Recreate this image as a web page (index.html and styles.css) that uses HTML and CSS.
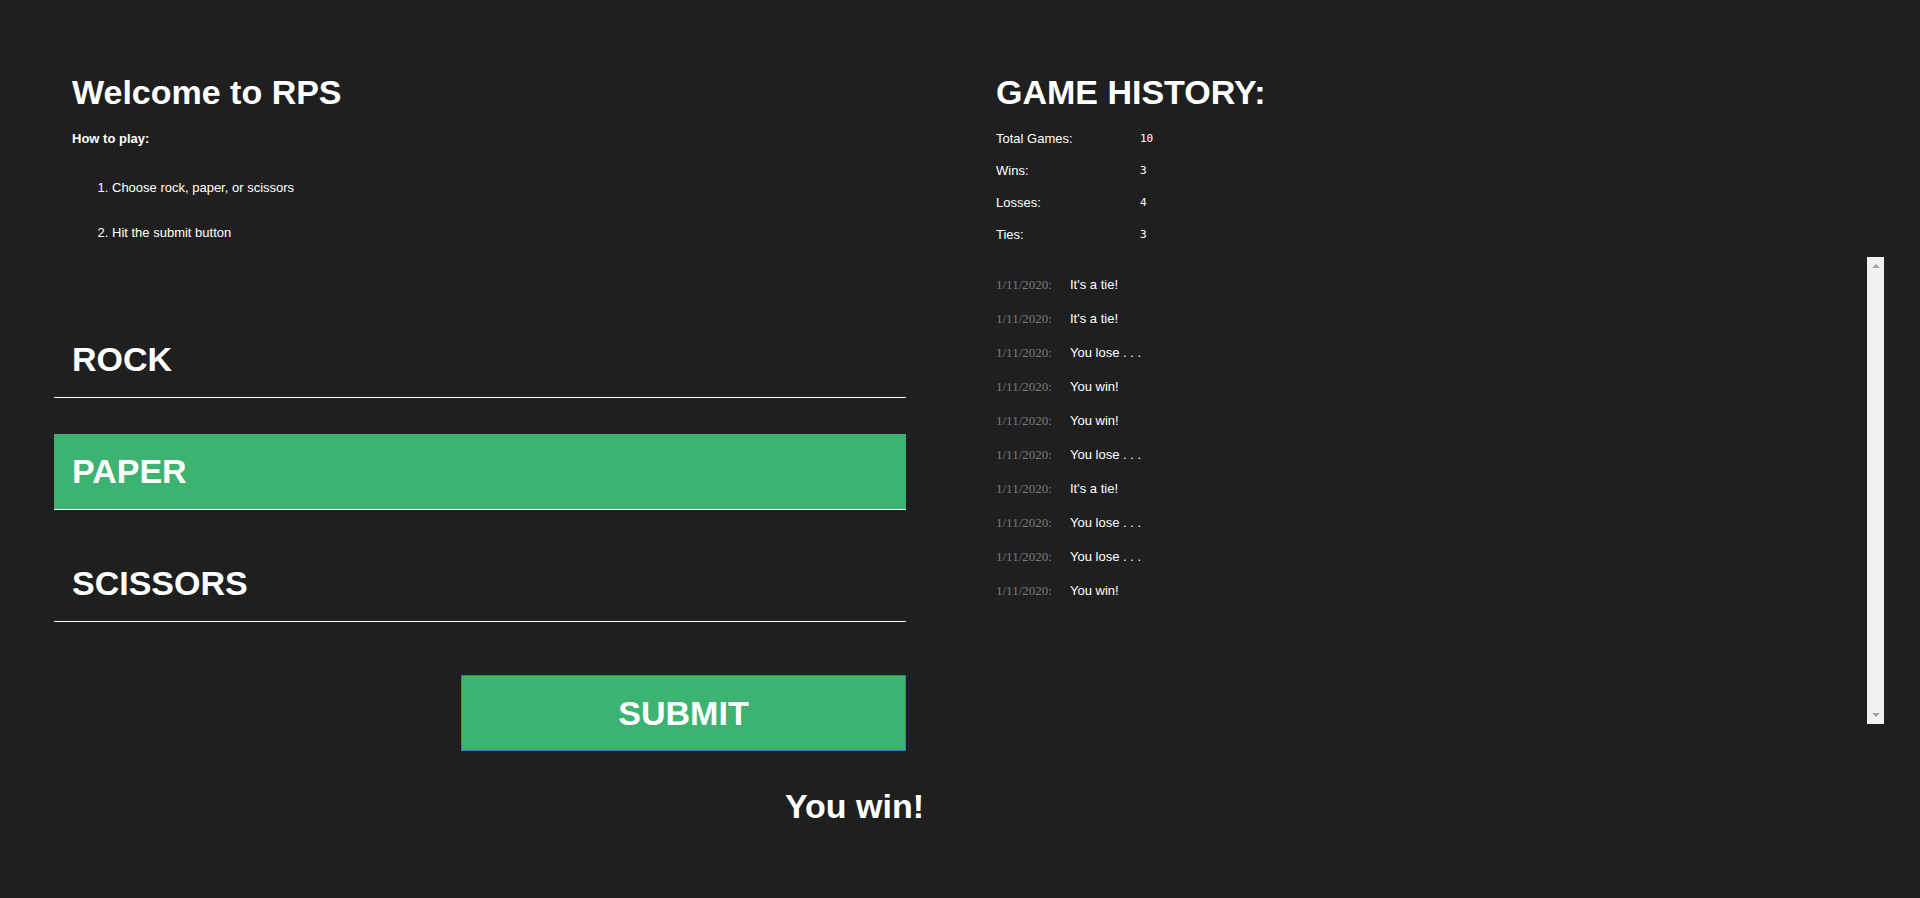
FILE: index.html
```html
<!DOCTYPE html>
<html lang="en">
<head>
<meta charset="utf-8">
<title>RPS</title>
<link rel="stylesheet" href="styles.css">
</head>
<body>
<div class="page">
  <section class="play">
    <div class="intro">
      <h1 class="title">Welcome to RPS</h1>
      <p class="howto">How to play:</p>
      <ol class="steps">
        <li>Choose rock, paper, or scissors</li>
        <li>Hit the submit button</li>
      </ol>
    </div>
    <form class="choices">
      <label class="choice"><input class="choice-input" type="radio" name="move" value="rock">ROCK</label>
      <label class="choice is-selected"><input class="choice-input" type="radio" name="move" value="paper" checked>PAPER</label>
      <label class="choice"><input class="choice-input" type="radio" name="move" value="scissors">SCISSORS</label>
      <div class="submit-row"><button class="submit" type="button">SUBMIT</button></div>
    </form>
    <p class="result">You win!</p>
  </section>
  <section class="history">
    <h1 class="title">GAME HISTORY:</h1>
    <div class="stats">
      <span class="stat-label">Total Games:</span><span class="stat-value">10</span>
      <span class="stat-label">Wins:</span><span class="stat-value">3</span>
      <span class="stat-label">Losses:</span><span class="stat-value">4</span>
      <span class="stat-label">Ties:</span><span class="stat-value">3</span>
    </div>
    <div class="history-box">
      <ul class="history-list">
        <li class="entry"><span class="entry-date">1/11/2020:</span><span class="entry-text">It's a tie!</span></li>
        <li class="entry"><span class="entry-date">1/11/2020:</span><span class="entry-text">It's a tie!</span></li>
        <li class="entry"><span class="entry-date">1/11/2020:</span><span class="entry-text">You lose . . .</span></li>
        <li class="entry"><span class="entry-date">1/11/2020:</span><span class="entry-text">You win!</span></li>
        <li class="entry"><span class="entry-date">1/11/2020:</span><span class="entry-text">You win!</span></li>
        <li class="entry"><span class="entry-date">1/11/2020:</span><span class="entry-text">You lose . . .</span></li>
        <li class="entry"><span class="entry-date">1/11/2020:</span><span class="entry-text">It's a tie!</span></li>
        <li class="entry"><span class="entry-date">1/11/2020:</span><span class="entry-text">You lose . . .</span></li>
        <li class="entry"><span class="entry-date">1/11/2020:</span><span class="entry-text">You lose . . .</span></li>
        <li class="entry"><span class="entry-date">1/11/2020:</span><span class="entry-text">You win!</span></li>
      </ul>
      <div class="scrollbar" aria-hidden="true">
        <span class="scroll-arrow scroll-arrow-up"></span>
        <span class="scroll-arrow scroll-arrow-down"></span>
      </div>
    </div>
  </section>
</div>
</body>
</html>
```
FILE: styles.css
```css
html, body {
  margin: 0;
  padding: 0;
  background: #1f1f1f;
  color: #ffffff;
  font-family: "Liberation Sans", Arial, sans-serif;
}

.page {
  display: grid;
  grid-template-columns: 960px 960px;
  height: 898px;
  overflow: hidden;
}

.play {
  padding: 0 54px;
}

.history {
  padding: 0 36px;
}

.title {
  margin: 72px 0 0;
  font-size: 34px;
  line-height: 40px;
  font-weight: bold;
}

.intro {
  padding: 0 18px;
}

.howto {
  margin: 19px 0 0;
  font-size: 13px;
  line-height: 16px;
  font-weight: bold;
}

.steps {
  margin: 33px 0 0;
  padding-left: 40px;
  font-size: 13px;
  line-height: 16px;
}

.steps li + li {
  margin-top: 29px;
}

.choices {
  margin: 81px 0 0;
  display: flex;
  flex-direction: column;
}

.choice {
  display: flex;
  align-items: center;
  height: 75px;
  padding-left: 18px;
  border-bottom: 1px solid #ffffff;
  font-size: 34px;
  font-weight: bold;
  cursor: pointer;
}

.choice + .choice {
  margin-top: 36px;
}

.choice.is-selected {
  background: #3cb371;
}

.choice-input {
  display: none;
}

.submit-row {
  display: flex;
  justify-content: flex-end;
  margin-top: 53px;
}

.submit {
  box-sizing: border-box;
  width: 445px;
  height: 76px;
  margin: 0;
  padding: 0;
  background: #3cb371;
  border: 1px solid #4672b8;
  color: #ffffff;
  font-family: "Liberation Sans", Arial, sans-serif;
  font-size: 34px;
  font-weight: bold;
}

.result {
  margin: 35px -18px 0 0;
  text-align: right;
  font-size: 34px;
  line-height: 40px;
  font-weight: bold;
}

.stats {
  margin-top: 11px;
  display: grid;
  grid-template-columns: 144px 1fr;
  grid-auto-rows: 32px;
  align-items: center;
  font-size: 13px;
}

.stat-label {
  line-height: 32px;
}

.stat-value {
  font-family: "DejaVu Sans Mono", "Liberation Mono", monospace;
  font-size: 11px;
  line-height: 32px;
}

.history-box {
  position: relative;
  margin-top: 6px;
  height: 467px;
}

.history-list {
  box-sizing: border-box;
  list-style: none;
  margin: 0;
  padding: 11px 17px 0 0;
  height: 100%;
  overflow: hidden;
}

.entry {
  display: flex;
  height: 34px;
  line-height: 34px;
  font-size: 13px;
}

.entry-date {
  width: 74px;
  flex: none;
  font-family: "Liberation Serif", "Times New Roman", serif;
  color: #7a7a7a;
}

.scrollbar {
  position: absolute;
  top: 0;
  right: 0;
  bottom: 0;
  width: 17px;
  box-sizing: border-box;
  padding: 7px 0;
  background: #f1f1f1;
  display: flex;
  flex-direction: column;
  justify-content: space-between;
  align-items: center;
}

.scroll-arrow {
  width: 0;
  height: 0;
  border-left: 4px solid transparent;
  border-right: 4px solid transparent;
}

.scroll-arrow-up {
  border-bottom: 4px solid #a3a3a3;
}

.scroll-arrow-down {
  border-top: 4px solid #a3a3a3;
}
```
